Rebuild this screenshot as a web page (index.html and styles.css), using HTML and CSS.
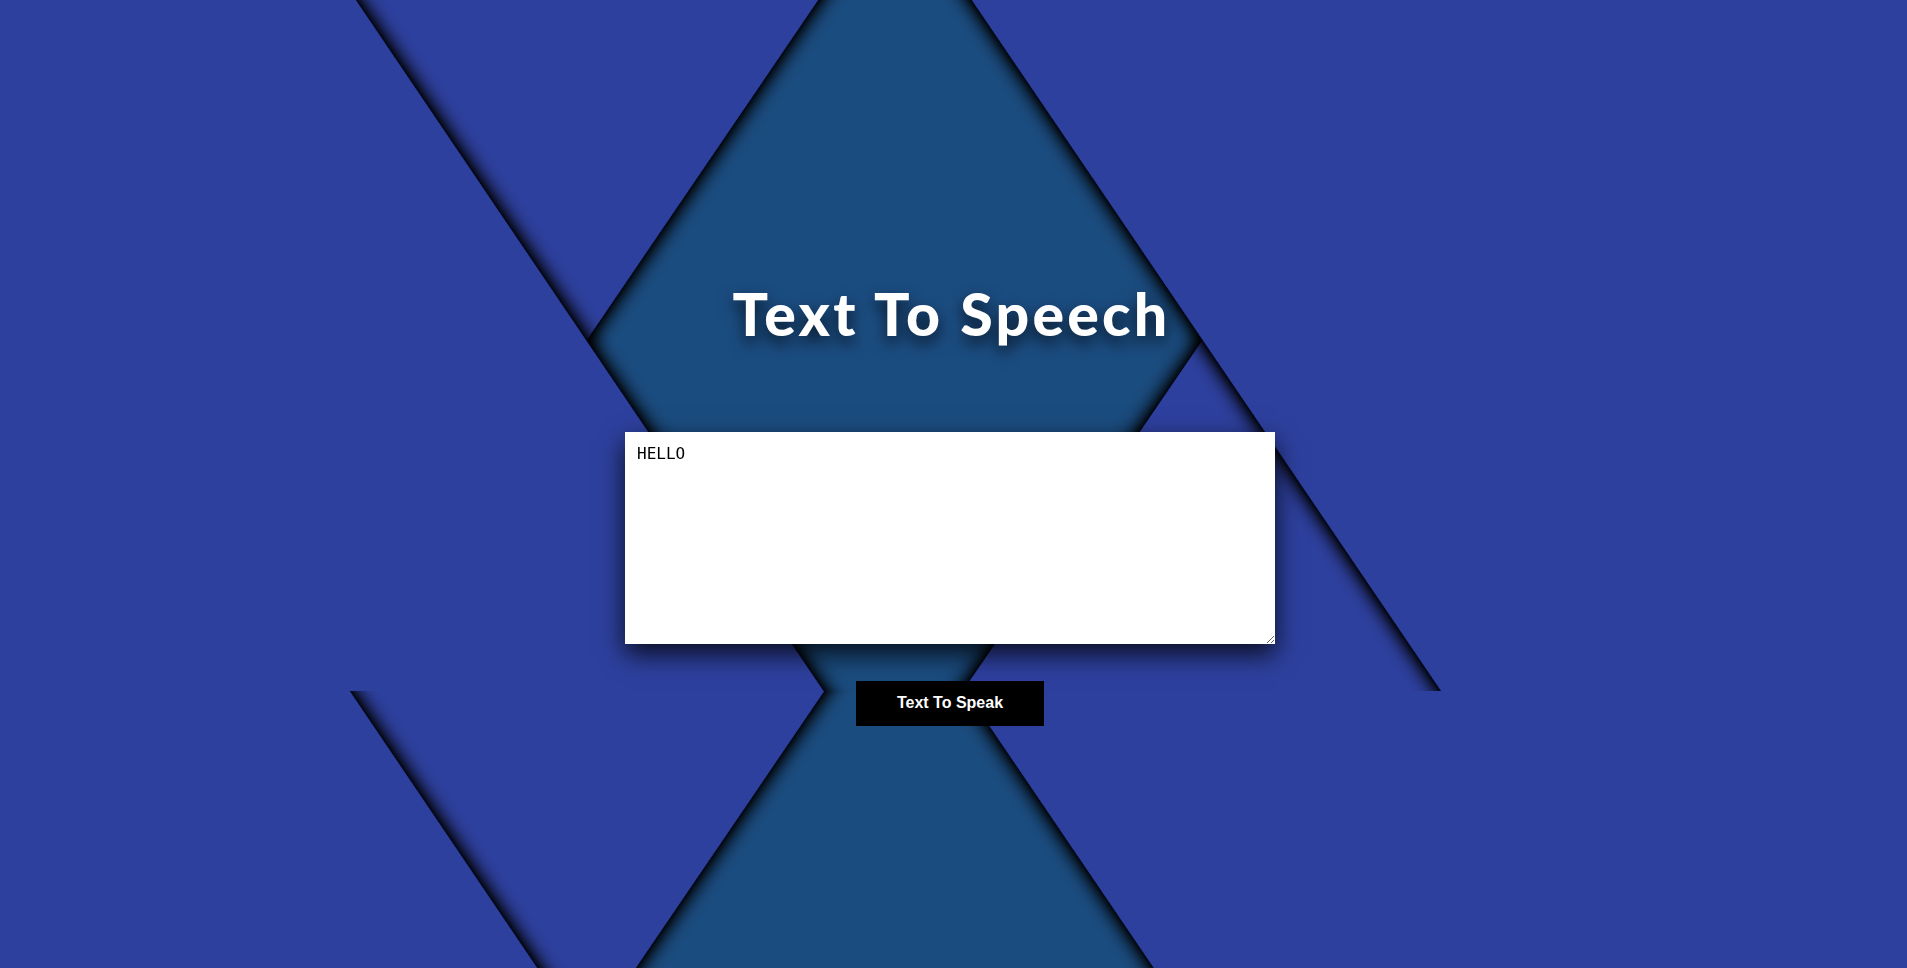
FILE: index.html
```html
<!DOCTYPE html>
<html lang="en">
<head>
<meta charset="utf-8">
<title>Text To Speech</title>
<link rel="stylesheet" href="styles.css">
</head>
<body>
<svg class="backdrop" width="1907" height="968" viewBox="0 0 1907 968" aria-hidden="true">
  <defs>
    <filter id="edge-shadow" filterUnits="userSpaceOnUse" x="-300" y="-300" width="2600" height="1400">
      <feGaussianBlur in="SourceAlpha" stdDeviation="10.5"/>
      <feComponentTransfer>
        <feFuncA type="linear" slope="1.9"/>
      </feComponentTransfer>
      <feMerge>
        <feMergeNode/>
        <feMergeNode in="SourceGraphic"/>
      </feMerge>
    </filter>
    <clipPath id="tile-clip">
      <rect x="0" y="0" width="1907" height="700"/>
    </clipPath>
    <g id="tile-art">
      <rect x="-100" y="-100" width="2200" height="900" fill="#1b4c80"/>
      <polygon points="1482,-60 2100,-60 2100,760 922,760" fill="#2d3f9e" filter="url(#edge-shadow)"/>
      <polygon points="-200,-60 865,-60 307,760 -200,760" fill="#2d3f9e" filter="url(#edge-shadow)"/>
      <polygon points="925,-60 2100,-60 2100,760 1482,760" fill="#2d3f9e" filter="url(#edge-shadow)"/>
      <polygon points="-200,-60 309,-60 864,760 -200,760" fill="#2d3f9e" filter="url(#edge-shadow)"/>
    </g>
  </defs>
  <g transform="translate(0,-9)">
    <g clip-path="url(#tile-clip)"><use href="#tile-art"/></g>
  </g>
  <g transform="translate(0,691)">
    <g clip-path="url(#tile-clip)"><use href="#tile-art"/></g>
  </g>
</svg>

<main class="page">
  <h1 class="title">Text To Speech</h1>
  <textarea class="speech-input">HELLO</textarea>
  <button class="speak-btn" type="button">Text To Speak</button>
</main>
</body>
</html>
```

FILE: styles.css
```css
html, body {
  margin: 0;
  padding: 0;
  height: 100%;
  overflow: hidden;
}

body {
  background: #2d3f9e;
  font-family: "Liberation Sans", Arial, sans-serif;
}

.backdrop {
  position: fixed;
  top: 0;
  left: 0;
  z-index: 0;
  display: block;
}

.page {
  position: relative;
  z-index: 1;
  display: flex;
  flex-direction: column;
  align-items: center;
  padding: 279px 7px 0 0;
}

.title {
  margin: 0 -3px 0 0;
  font-family: "Lato", "Open Sans", sans-serif;
  font-weight: 900;
  font-size: 59px;
  line-height: 1.2;
  letter-spacing: 3.2px;
  color: #ffffff;
  text-shadow: 0 7px 16px rgba(0, 0, 0, 0.75);
}

.speech-input {
  display: block;
  box-sizing: border-box;
  width: 650px;
  height: 212px;
  margin-top: 82px;
  padding: 12px;
  border: none;
  outline: none;
  background: #ffffff;
  color: #000000;
  font-family: "DejaVu Sans Mono", monospace;
  font-size: 16px;
  box-shadow: 0 10px 24px rgba(0, 0, 0, 0.8);
}

.speak-btn {
  display: block;
  box-sizing: border-box;
  width: 188px;
  height: 45px;
  margin-top: 37px;
  padding: 0;
  border: none;
  background: #000000;
  color: #ffffff;
  font-family: "Liberation Sans", Arial, sans-serif;
  font-weight: 700;
  font-size: 16px;
  cursor: pointer;
}
```
